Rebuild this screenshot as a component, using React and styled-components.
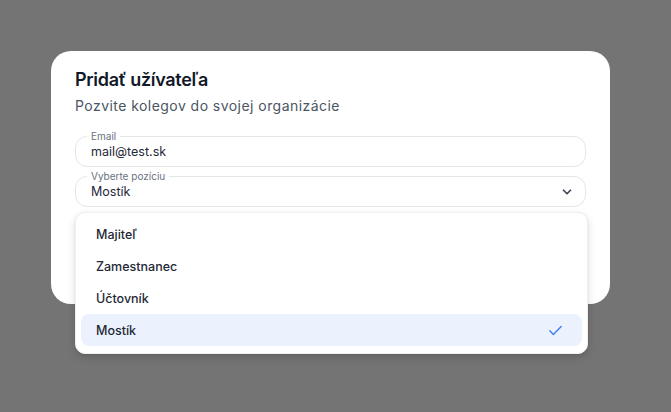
import styled, { createGlobalStyle } from 'styled-components';

const GlobalStyle = createGlobalStyle`
  html, body { margin: 0; padding: 0; }
  body {
    font-family: Inter, "Noto Sans", "Liberation Sans", sans-serif;
    background: #747474;
    -webkit-font-smoothing: antialiased;
  }
`;

const Overlay = styled.div`
  width: 671px;
  height: 412px;
  box-sizing: border-box;
  padding: 51px 61px 0 51px;
  background: #747474;
  overflow: hidden;
`;

const Dialog = styled.div`
  background: #fff;
  border-radius: 20px;
  padding: 17px 24px 96px;
  box-sizing: border-box;
  height: 253px;
`;

const Title = styled.h2`
  margin: 0;
  font-size: 18px;
  line-height: 24px;
  font-weight: 600;
  letter-spacing: -0.3px;
  color: #111827;
`;

const Subtitle = styled.p`
  margin: 4px 0 14px;
  font-size: 14px;
  line-height: 20px;
  letter-spacing: 0.45px;
  color: #4b5563;
`;

const Field = styled.fieldset`
  margin: 0 0 ${p => p.$gap || 0}px;
  padding: 1px 15px 5px;
  border: 1.5px solid #e3e5e8;
  border-radius: 12px;
  min-width: 0;
`;

const Legend = styled.legend`
  font-size: 10px;
  line-height: 12px;
  padding: 0 4px;
  margin-left: -4px;
  color: #6b7280;
`;

const Value = styled.div`
  display: flex;
  align-items: center;
  justify-content: space-between;
  font-size: 12.5px;
  line-height: 18px;
  color: #1f2937;
`;

const SelectWrap = styled.div`
  position: relative;
`;

const Menu = styled.ul`
  position: absolute;
  top: calc(100% + 5px);
  left: 0;
  width: calc(100% + 2px);
  box-sizing: border-box;
  margin: 0;
  padding: 5px 5px 7px;
  list-style: none;
  background: #fff;
  border: 1px solid #f0f0f0;
  border-radius: 10px;
  box-shadow: 0 4px 10px rgba(0, 0, 0, 0.12), 0 1px 3px rgba(0, 0, 0, 0.08);
`;

const Item = styled.li`
  display: flex;
  align-items: center;
  justify-content: space-between;
  height: 32px;
  padding: 0 18px 0 15px;
  border-radius: 8px;
  font-size: 12.5px;
  font-weight: 500;
  color: #1f2937;
  background: ${p => (p.$active ? '#ebf1fd' : 'transparent')};
`;

const Chevron = () => (
  <svg width="14" height="14" viewBox="0 0 24 24" fill="none" stroke="#3f4756" strokeWidth="3" strokeLinecap="round" strokeLinejoin="round" style={{ marginRight: -4 }}>
    <path d="M6 9l6 6 6-6" />
  </svg>
);

const Check = () => (
  <svg width="17" height="17" viewBox="0 0 24 24" fill="none" stroke="#3b7ff0" strokeWidth="2" strokeLinecap="round" strokeLinejoin="round">
    <path d="M4 12.5l5 5L20 6.5" />
  </svg>
);

const options = ['Majiteľ', 'Zamestnanec', 'Účtovník', 'Mostík'];

export default function App() {
  const selected = 'Mostík';
  return (
    <>
      <GlobalStyle />
      <Overlay>
        <Dialog>
          <Title>Pridať užívateľa</Title>
          <Subtitle>Pozvite kolegov do svojej organizácie</Subtitle>
          <Field $gap={3}>
            <Legend>Email</Legend>
            <Value>mail@test.sk</Value>
          </Field>
          <SelectWrap>
            <Field>
              <Legend>Vyberte pozíciu</Legend>
              <Value>
                {selected}
                <Chevron />
              </Value>
            </Field>
            <Menu>
              {options.map(o => (
                <Item key={o} $active={o === selected}>
                  {o}
                  {o === selected && <Check />}
                </Item>
              ))}
            </Menu>
          </SelectWrap>
        </Dialog>
      </Overlay>
    </>
  );
}
